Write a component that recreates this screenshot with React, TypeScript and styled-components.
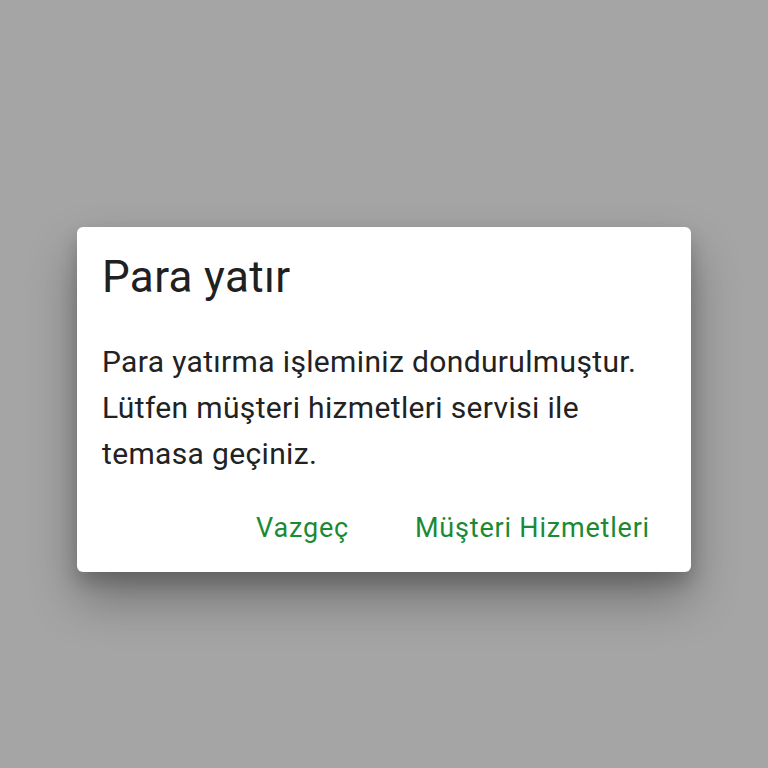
import styled, { createGlobalStyle } from "styled-components"

const Global = createGlobalStyle`
  html, body {
    margin: 0;
    padding: 0;
    background: #a5a5a5;
  }
  body {
    font-family: Roboto, "Noto Sans", sans-serif;
  }
`

const Screen = styled.div`
  width: 768px;
  height: 768px;
  display: flex;
  flex-direction: column;
  align-items: flex-start;
  padding: 227px 0 0 77px;
  box-sizing: border-box;
`

const Dialog = styled.div`
  width: 614px;
  height: 345px;
  box-sizing: border-box;
  background: #ffffff;
  border-radius: 6px;
  box-shadow: 0 26px 50px rgba(0, 0, 0, 0.32), 0 10px 18px rgba(0, 0, 0, 0.18);
  padding: 24px 41px 0 25px;
  display: flex;
  flex-direction: column;
`

const Title = styled.h2`
  margin: 0;
  font-size: 44px;
  font-weight: 400;
  letter-spacing: 0.35px;
  color: #202020;
  line-height: 52px;
`

const Message = styled.p`
  margin: 36px 0 0 0;
  font-size: 30px;
  letter-spacing: 0.35px;
  line-height: 46px;
  color: #222222;
`

const Actions = styled.div`
  display: flex;
  justify-content: flex-end;
  gap: 66px;
  margin-top: 31px;
`

const ActionButton = styled.button`
  border: none;
  background: none;
  padding: 0;
  font-family: Roboto, "Noto Sans", sans-serif;
  font-size: 27px;
  letter-spacing: 0.8px;
  line-height: 40px;
  color: #1b8a34;
  cursor: pointer;
`

const App = () => {
  return (
    <>
      <Global />
      <Screen>
        <Dialog>
          <Title>Para yatır</Title>
          <Message>
            Para yatırma işleminiz dondurulmuştur.
            <br />
            Lütfen müşteri hizmetleri servisi ile
            <br />
            temasa geçiniz.
          </Message>
          <Actions>
            <ActionButton>Vazgeç</ActionButton>
            <ActionButton>Müşteri Hizmetleri</ActionButton>
          </Actions>
        </Dialog>
      </Screen>
    </>
  )
}

export default App
